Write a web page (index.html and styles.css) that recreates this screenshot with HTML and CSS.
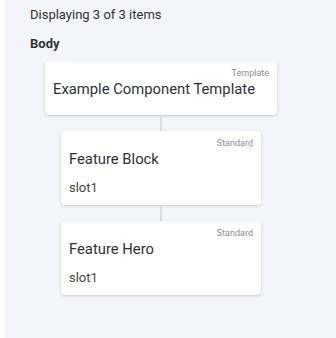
FILE: index.html
```html
<!DOCTYPE html>
<html lang="en">
<head>
    <meta charset="UTF-8">
    <title>Components</title>
    <link rel="stylesheet" href="styles.css">
</head>
<body>
    <div class="panel">
        <p class="count">Displaying 3 of 3 items</p>
        <h4 class="zone">Body</h4>
        <div class="tree">
            <div class="card card-top">
                <span class="tag">Template</span>
                <div class="title">Example Component Template</div>
            </div>
            <div class="line"></div>
            <div class="card">
                <span class="tag">Standard</span>
                <div class="title">Feature Block</div>
                <div class="slot">slot1</div>
            </div>
            <div class="line"></div>
            <div class="card">
                <span class="tag">Standard</span>
                <div class="title">Feature Hero</div>
                <div class="slot">slot1</div>
            </div>
        </div>
    </div>
</body>
</html>
```

FILE: styles.css
```css
*{
    margin: 0;
    padding: 0;
    box-sizing: border-box;
}
html,body{
    width: 100%;
    height: 100%;
    background-color: #fff;
}
body{
    padding-left: 5px;
    font-family: "Roboto", "Noto Sans", sans-serif;
    color: #333;
}
.panel{
    height: 100%;
    background-color: #f4f5fa;
    padding: 6px 0 0 25px;
}
.count{
    font-size: 13px;
    line-height: 17px;
}
.zone{
    margin-top: 12px;
    font-size: 13px;
    font-weight: 700;
    line-height: 17px;
}
.tree{
    width: 232px;
    margin-top: 9px;
    margin-left: 15px;
    display: flex;
    flex-direction: column;
    align-items: center;
}
.card{
    width: 200px;
    height: 74px;
    background-color: #fff;
    border-radius: 4px;
    box-shadow: 0 1px 3px rgba(0,0,0,0.18);
    padding: 6px 8px 0 8px;
    display: flex;
    flex-direction: column;
}
.card-top{
    width: 232px;
    height: 54px;
}
.tag{
    align-self: flex-end;
    font-size: 9px;
    line-height: 12px;
    color: #8a8d98;
}
.title{
    font-size: 14.8px;
    line-height: 20px;
    color: #2f3238;
}
.slot{
    margin-top: 10px;
    font-size: 13px;
    line-height: 17px;
    color: #444;
}
.line{
    width: 2px;
    height: 16px;
    background-color: #dcdde2;
}
```
